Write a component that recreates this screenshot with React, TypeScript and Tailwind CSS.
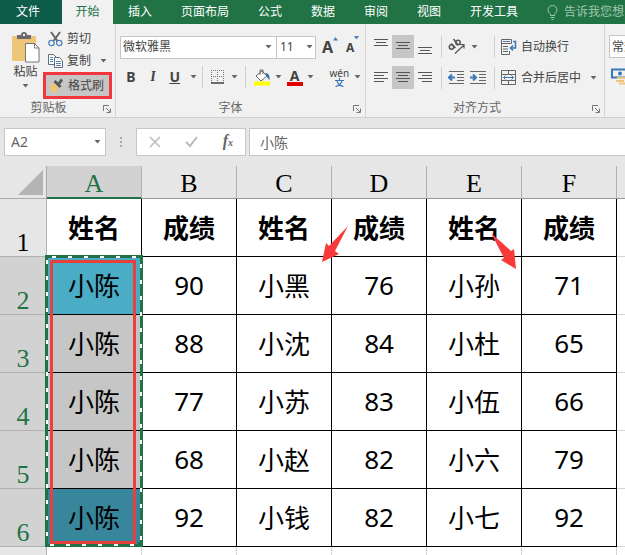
import React from 'react';

const tabs = ['插入', '页面布局', '公式', '数据', '审阅', '视图', '开发工具'];
const columns = ['A', 'B', 'C', 'D', 'E', 'F'];
const rows = [
  ['姓名', '成绩', '姓名', '成绩', '姓名', '成绩'],
  ['小陈', '90', '小黑', '76', '小孙', '71'],
  ['小陈', '88', '小沈', '84', '小杜', '65'],
  ['小陈', '77', '小苏', '83', '小伍', '66'],
  ['小陈', '68', '小赵', '82', '小六', '79'],
  ['小陈', '92', '小钱', '82', '小七', '92'],
];
const fills = ['bg-white', 'bg-[#4bacc6]', 'bg-[#c6c6c6]', 'bg-[#c6c6c6]', 'bg-[#c6c6c6]', 'bg-[#38869b]'];

function Caret() {
  return (
    <svg width="7" height="4" viewBox="0 0 7 4" className="shrink-0" aria-hidden="true">
      <path d="M0.5 0h6L3.5 3.5z" fill="#666" />
    </svg>
  );
}

function CaretButton({ label }: { label: string }) {
  return (
    <button aria-label={label} className="flex h-5 w-4 items-center justify-center">
      <Caret />
    </button>
  );
}

function Launcher({ label }: { label: string }) {
  return (
    <button aria-label={label} className="absolute right-1 bottom-1">
      <svg width="8" height="8" viewBox="0 0 8 8" fill="none" stroke="#777">
        <path d="M0.5 6V0.5H6M3 3l4 4M7.5 3.5v4h-4" />
      </svg>
    </button>
  );
}

function Divider() {
  return <span className="h-[22px] w-px shrink-0 bg-[#d0d0d0]" />;
}

function AlignButton({ label, lines, active }: { label: string; lines: number[][]; active?: boolean }) {
  return (
    <button
      aria-label={label}
      aria-pressed={!!active}
      className={`flex h-[23px] w-[22px] items-center justify-center ${active ? 'bg-[#c6c6c6]' : ''}`}
    >
      <svg width="16" height="17" viewBox="0 0 16 17" stroke="#555" aria-hidden="true">
        {lines.map(([x1, x2, y]) => <path key={y} d={`M${x1} ${y}.5H${x2}`} />)}
      </svg>
    </button>
  );
}

function TabBar() {
  return (
    <nav className="flex h-6 items-stretch overflow-hidden bg-[#217346] text-xs whitespace-nowrap text-white">
      <button className="w-[62px] shrink-0 bg-[#0e5c4a] pr-1.5">文件</button>
      <button className="w-[51px] shrink-0 bg-[#f1f1f1] text-[#217346]">开始</button>
      <div className="flex shrink-0 gap-[29px] pl-[15px]">
        {tabs.map((tab) => <button key={tab}>{tab}</button>)}
      </div>
      <button className="ml-[29px] flex shrink-0 items-center gap-1.5 text-[#a0c8b0]">
        <svg width="11" height="15" viewBox="0 0 11 15" fill="none" stroke="#a0c8b0">
          <path d="M3.5 10.5V9C2 8 1 6.500 1 5a4.500 4.500 0 0 1 9 0c0 1.500-1 3-2.500 4v1.500zM3.500 12.500h4M4.500 14.500h2" />
        </svg>
        告诉我您想
      </button>
    </nav>
  );
}

function ClipboardGroup() {
  return (
    <section className="relative flex w-[115px] shrink-0 flex-col">
      <div className="flex h-[76px]">
        <button className="flex w-[43px] shrink-0 flex-col items-center pt-2 pl-2">
          <svg width="28" height="31" viewBox="0 0 28 31" aria-hidden="true">
            <path d="M0 4h24v25H0z" fill="#eec679" />
            <path d="M5 7V3h4c0-2 1-3 3-3s3 1 3 3h4v4z" fill="#6b6b6b" />
            <path d="M11 2h2v2h-2z" fill="#f1f1f1" />
            <path d="M13.500 11.500h9l4.500 4.500v14h-13.500z" fill="#fff" stroke="#777" />
            <path d="M22.500 11.500V16H27" fill="none" stroke="#777" />
          </svg>
          <span className="mt-px leading-4">粘贴</span>
          <span className="mt-1"><Caret /></span>
        </button>
        <div className="flex flex-col pt-1">
          <button className="flex h-[22px] items-center gap-1 pl-[5px]">
            <svg width="15" height="16" viewBox="0 0 15 16" fill="none" aria-hidden="true">
              <path d="M3 1l6.500 9M12 1L5.500 10" stroke="#666" strokeWidth="2" />
              <circle cx="3.500" cy="12" r="2.700" stroke="#4a7fb8" strokeWidth="1.200" />
              <circle cx="11.200" cy="12" r="2.700" stroke="#4a7fb8" strokeWidth="1.200" />
            </svg>
            剪切
          </button>
          <div className="flex h-[22px] items-center">
            <button className="flex items-center gap-1 pl-[5px]">
              <svg width="15" height="14" viewBox="0 0 15 14" fill="#fff" stroke="#5f6f80" aria-hidden="true">
                <path d="M0.500 0.500h5l3 3v7h-8z" />
                <path d="M2 3.500h3M2 5.500h3M2 7.500h3" stroke="#4a7fb8" />
                <path d="M6.500 3.500h5l3 3v7h-8z" />
                <path d="M8 7.500h5M8 9.500h5M8 11.500h5" stroke="#4a7fb8" />
              </svg>
              复制
            </button>
            <span className="ml-1"><CaretButton label="复制选项" /></span>
          </div>
          <button className="flex h-[27px] w-[69px] items-center gap-1 border-[3px] border-[#f0383c] bg-[#c6c6c6] pl-0.5">
            <svg width="16" height="15" viewBox="0 0 16 15" aria-hidden="true">
              <path d="M1 8l5-3 5 5-3 5-4-1z" fill="#eec679" />
              <path d="M5.500 4l2-2 6 6-2 2z" fill="#555" />
              <path d="M10 4.500L13 0.500l2 2-3 4z" fill="#555" />
            </svg>
            格式刷
          </button>
        </div>
      </div>
      <h2 className="pr-[18px] text-center leading-4 text-[#666]">剪贴板</h2>
      <Launcher label="剪贴板设置" />
    </section>
  );
}

function FontGroup() {
  return (
    <section className="relative w-[250px] shrink-0 border-l border-[#d5d5d5]">
      <div className="flex h-[42px] items-center pt-1 pl-1">
        <div className="flex h-[23px] w-[157px] items-center border border-[#c6c6c6] bg-white">
          <input aria-label="字体" defaultValue="微软雅黑" className="w-full min-w-0 bg-transparent pl-0.5 outline-none" />
          <CaretButton label="字体列表" />
        </div>
        <div className="-ml-px flex h-[23px] w-10 items-center border border-[#c6c6c6] bg-white">
          <input aria-label="字号" defaultValue="11" className="w-full min-w-0 bg-transparent pl-[3px] outline-none" />
          <CaretButton label="字号列表" />
        </div>
        <button aria-label="增大字号" className="ml-1.5 flex font-bold">
          <span className="text-base leading-5">A</span>
          <svg width="5" height="4" viewBox="0 0 5 4"><path d="M0 3.500L2.500 0 5 3.500z" fill="#4a7fb8" /></svg>
        </button>
        <button aria-label="减小字号" className="ml-2 flex font-bold">
          <span className="pt-0.5 text-xs leading-5">A</span>
          <svg width="5" height="4" viewBox="0 0 5 4"><path d="M0 0h5L2.500 3.500z" fill="#4a7fb8" /></svg>
        </button>
      </div>
      <div className="flex h-[34px] items-center pb-3 pl-1">
        <button className="w-[22px] text-sm font-bold">B</button>
        <button className="w-[22px] font-serif text-sm font-bold italic">I</button>
        <button className="w-[22px] text-sm font-bold underline">U</button>
        <CaretButton label="下划线选项" />
        <Divider />
        <button aria-label="边框" className="ml-2">
          <svg width="14" height="14" viewBox="0 0 14 14" fill="none" stroke="#777">
            <path d="M0.500 0v13M6.500 0v13M12.500 0v13M0 0.500h13M0 6.500h13" strokeDasharray="1 1" />
            <path d="M0 13h13" stroke="#444" strokeWidth="1.500" />
          </svg>
        </button>
        <span className="mx-0.5"><CaretButton label="边框选项" /></span>
        <Divider />
        <button aria-label="填充颜色" className="ml-2">
          <svg width="17" height="17" viewBox="0 0 17 17">
            <path d="M2 7l6-5 5 5-6 5z" fill="#fff" stroke="#666" />
            <path d="M6 6V1h3v4" fill="none" stroke="#666" />
            <path d="M11 4c4 0 5 3 4.500 7-2-1-2-3-3-4z" fill="#3c6ea8" />
            <path d="M0 12.500h16v4H0z" fill="#ff0" />
          </svg>
        </button>
        <CaretButton label="填充颜色选项" />
        <button aria-label="字体颜色" className="flex w-4 flex-col items-center">
          <span className="text-sm leading-[13px] font-bold">A</span>
          <span className="h-1 w-4 bg-[#e00000]" />
        </button>
        <CaretButton label="字体颜色选项" />
        <span className="ml-[3px]"><Divider /></span>
        <button aria-label="拼音" className="ml-2 flex flex-col items-center">
          <span className="text-[10px] leading-[10px]">wén</span>
          <svg width="9" height="9" viewBox="0 0 9 9" fill="none" stroke="#3c78b8" strokeWidth="1.200">
            <path d="M4.500 0v2M0 2.500h9M2 3c1 3 3 5 6.500 5.500M7 3C6 6 4 8 0.500 8.500" />
          </svg>
        </button>
        <CaretButton label="拼音选项" />
      </div>
      <h2 className="pr-5 text-center leading-4 text-[#666]">字体</h2>
      <Launcher label="字体设置" />
    </section>
  );
}

function AlignGroup() {
  return (
    <section className="relative w-[239px] shrink-0 border-l border-[#d5d5d5]">
      <div className="flex h-[76px]">
        <div className="flex w-[75px] flex-col gap-2 pt-[11px] pl-1">
          <div className="flex">
            <AlignButton label="顶端对齐" lines={[[1, 15, 1], [3, 13, 4], [1, 15, 7]]} />
            <AlignButton label="垂直居中" active lines={[[1, 15, 4], [3, 13, 7], [1, 15, 10]]} />
            <AlignButton label="底端对齐" lines={[[1, 15, 9], [3, 13, 12], [1, 15, 15]]} />
          </div>
          <div className="flex">
            <AlignButton label="左对齐" lines={[[1, 15, 3], [1, 11, 6], [1, 15, 9], [1, 11, 12]]} />
            <AlignButton label="居中" active lines={[[1, 15, 3], [3, 13, 6], [1, 15, 9], [3, 13, 12]]} />
            <AlignButton label="右对齐" lines={[[1, 15, 3], [5, 15, 6], [1, 15, 9], [5, 15, 12]]} />
          </div>
        </div>
        <div className="flex w-[53px] flex-col gap-2 pt-[11px]">
          <div className="flex h-[23px] items-center">
            <Divider />
            <button aria-label="方向" className="ml-1.5">
              <svg width="18" height="17" viewBox="0 0 18 17" fill="none" stroke="#555" strokeWidth="1.500">
                <circle cx="3.500" cy="9" r="2.200" />
                <path d="M3 5.500l4.500 4.500M5.500 1l4.500 6" />
                <circle cx="10" cy="4.500" r="2.200" />
                <path d="M7 15.500l9-8.500M12 6.500h4v4" strokeWidth="1.200" />
              </svg>
            </button>
            <CaretButton label="方向选项" />
          </div>
          <div className="flex h-[23px] items-center gap-1.5">
            <Divider />
            <button aria-label="减少缩进量">
              <svg width="16" height="14" viewBox="0 0 16 14" fill="none" stroke="#666">
                <path d="M1 0.500h15M9 3.500h7M9 6.500h7M9 9.500h7M1 12.500h15" />
                <path d="M7 6.500H1M4 3.500l-3 3 3 3" stroke="#3c78b8" strokeWidth="2" />
              </svg>
            </button>
            <button aria-label="增加缩进量">
              <svg width="16" height="14" viewBox="0 0 16 14" fill="none" stroke="#666">
                <path d="M0 0.500h16M9 3.500h7M9 6.500h7M9 9.500h7M0 12.500h16" />
                <path d="M0 6.500h6M3 3.500l3 3-3 3" stroke="#3c78b8" strokeWidth="2" />
              </svg>
            </button>
          </div>
        </div>
        <div className="flex flex-col gap-2 pt-[11px]">
          <div className="flex h-[23px] items-center">
            <Divider />
            <button className="ml-1.5 flex items-center gap-1">
              <svg width="16" height="16" viewBox="0 0 16 16" fill="none" stroke="#666">
                <path d="M0.500 0.500h10v4h-10zM0.500 4v11.500h8V12M2 7.500h5M2 10h5M2 12.500h5" />
                <path d="M2 2.500h7" stroke="#4a7fb8" />
                <path d="M12 2.500h2.500V9H9.500M12 6.500L9.500 9l2.500 2.500" stroke="#3c78b8" strokeWidth="1.500" />
              </svg>
              自动换行
            </button>
          </div>
          <div className="flex h-[23px] items-center">
            <Divider />
            <button className="ml-1.5 flex items-center gap-1">
              <svg width="16" height="16" viewBox="0 0 16 16" fill="none" stroke="#666">
                <path d="M0.500 0.500h14v14h-14zM0 4.500h15M0 10.500h15M7.500 0v4M7.500 11v4" />
                <path d="M2.500 7.500h10M4.500 5.500l-2 2 2 2M10.500 5.500l2 2-2 2" stroke="#3c78b8" />
              </svg>
              合并后居中
            </button>
            <span className="ml-1"><CaretButton label="合并选项" /></span>
          </div>
        </div>
      </div>
      <h2 className="pr-4 text-center leading-4 text-[#666]">对齐方式</h2>
      <Launcher label="对齐设置" />
    </section>
  );
}

function NumberGroup() {
  return (
    <section className="min-w-0 flex-1 overflow-hidden border-l border-[#d5d5d5] pt-[11px] pl-1">
      <select aria-label="数字格式" className="h-[23px] w-[100px] appearance-none border border-[#c6c6c6] bg-white pl-0.5">
        <option>常规</option>
      </select>
      <button aria-label="会计数字格式" className="mt-2.5 ml-0.5 block">
        <svg width="20" height="17" viewBox="0 0 20 17" fill="none">
          <path d="M1 1.500h18v8H1z" stroke="#3c78b8" strokeWidth="2" />
          <circle cx="9" cy="5.500" r="2" fill="#3c78b8" />
          <path d="M6 10h8M5 13h8M8 15.500h8" stroke="#eec679" strokeWidth="2" />
        </svg>
      </button>
    </section>
  );
}

function FormulaBar() {
  return (
    <div className="flex h-12 items-center bg-[#e6e6e6] pl-1 text-[#666]">
      <div className="flex h-7 w-[102px] shrink-0 items-center border border-[#c6c6c6] bg-white pr-px">
        <input aria-label="名称框" defaultValue="A2" className="w-full min-w-0 bg-transparent pl-1.5 text-sm outline-none" />
        <CaretButton label="名称列表" />
      </div>
      <svg width="30" height="12" viewBox="0 0 30 12" className="shrink-0" fill="#aaa" aria-hidden="true">
        <path d="M14 1h2v2h-2zM14 5h2v2h-2zM14 9h2v2h-2z" />
      </svg>
      <div className="flex h-7 w-[110px] shrink-0 items-center justify-between border border-[#c6c6c6] bg-white px-3">
        <button aria-label="取消">
          <svg width="12" height="12" viewBox="0 0 12 12" stroke="#bbb" strokeWidth="1.500"><path d="M1 1l10 10M11 1L1 11" /></svg>
        </button>
        <button aria-label="输入">
          <svg width="13" height="12" viewBox="0 0 13 12" fill="none" stroke="#bbb" strokeWidth="2"><path d="M1 6l4 4 7-9" /></svg>
        </button>
        <button aria-label="插入函数" className="font-['Liberation_Serif',serif] text-base leading-4 font-bold italic">
          f<span className="text-[10px]">x</span>
        </button>
      </div>
      <input
        aria-label="编辑栏"
        defaultValue="小陈"
        className="ml-[3px] h-7 min-w-0 flex-1 border border-r-0 border-[#c6c6c6] bg-white pl-2.5 text-sm outline-none"
      />
    </div>
  );
}

function Selection() {
  return (
    <svg width="98" height="292" viewBox="0 0 98 292" fill="none" className="pointer-events-none absolute -top-0.5 -left-0.5 z-10">
      <rect x="1.500" y="1.500" width="95" height="289" stroke="#217346" strokeWidth="3" />
      <rect x="2" y="2" width="94" height="288" stroke="#fff" strokeWidth="2" strokeDasharray="4 12" strokeDashoffset="-5" />
      <path d="M93 287h5v5h-5z" fill="#217346" />
      <rect x="6.500" y="6.500" width="83" height="281" stroke="#e8403c" strokeWidth="3" />
    </svg>
  );
}

function Sheet() {
  return (
    <div className="min-h-0 flex-1 overflow-hidden">
      <table className="w-full table-fixed border-separate border-spacing-0 text-[26px] leading-none text-black">
        <colgroup>
          <col className="w-[47px]" />
          {columns.map((c) => <col key={c} className="w-[95px]" />)}
          <col />
        </colgroup>
        <thead className="font-['Liberation_Serif',serif]">
          <tr className="h-[33px] bg-[#e6e6e6]">
            <th aria-label="全选" className="border-r border-b border-[#aaa] p-0">
              <svg width="25" height="25" viewBox="0 0 25 25" className="ml-[18px]"><path d="M25 0v25H0z" fill="#b4b4b4" /></svg>
            </th>
            {columns.map((c) => (
              <th
                key={c}
                className={`border-r border-r-[#b0b0b0] p-0 pt-1 font-normal ${c === 'A' ? 'border-b-2 border-b-[#217346] bg-[#d2d2d2] text-[#217346]' : 'border-b border-b-[#999]'}`}
              >
                {c}
              </th>
            ))}
            <th className="border-b border-[#999]" />
          </tr>
        </thead>
        <tbody>
          {rows.map((row, r) => (
            <tr key={r} className="h-[58px]">
              <th
                scope="row"
                className={`border-r border-b border-[#b0b0b0] p-0 align-bottom font-['Liberation_Serif',serif] font-normal ${r ? 'bg-[#d2d2d2] text-[#217346]' : 'bg-[#e6e6e6]'}`}
              >
                {r + 1}
              </th>
              {row.map((text, c) => (
                <td
                  key={c}
                  className={`relative border-r border-b border-black p-0 text-center ${r ? '' : 'font-bold'} ${r && c % 2 ? 'pb-0.5' : ''} ${c ? 'bg-white' : fills[r]}`}
                >
                  {text}
                  {r === 1 && c === 0 && <Selection />}
                  {r === 0 && c === 2 && (
                    <svg width="26" height="36" viewBox="0 0 26 36" className="absolute top-[27px] -right-[17px] z-20">
                      <path d="M26 0L13 25l4 3L0 36l4-19 3 3z" fill="#f83a3a" />
                    </svg>
                  )}
                  {r === 0 && c === 4 && (
                    <svg width="25" height="36" viewBox="0 0 25 36" className="absolute top-[34px] right-[5px] z-20">
                      <path d="M0 0l20 18 3-2 2 20-15-9 3-2z" fill="#f83a3a" />
                    </svg>
                  )}
                </td>
              ))}
              <td className="border-b border-[#d4d4d4] bg-white" />
            </tr>
          ))}
          <tr className="h-[58px]">
            <th className="border-r border-[#b0b0b0] bg-[#e6e6e6]" />
            {columns.map((c) => <td key={c} className="border-r border-[#d4d4d4] bg-white" />)}
            <td className="bg-white" />
          </tr>
        </tbody>
      </table>
    </div>
  );
}

function App() {
  return (
    <main className="flex h-screen flex-col overflow-hidden bg-white font-['Noto_Sans','Noto_Sans_CJK_SC',sans-serif] text-xs text-[#444]">
      <TabBar />
      <div className="flex h-[94px] overflow-hidden border-b border-[#d0d0d0] bg-[#f1f1f1] whitespace-nowrap">
        <ClipboardGroup />
        <FontGroup />
        <AlignGroup />
        <NumberGroup />
      </div>
      <FormulaBar />
      <Sheet />
    </main>
  );
}

export default App;
